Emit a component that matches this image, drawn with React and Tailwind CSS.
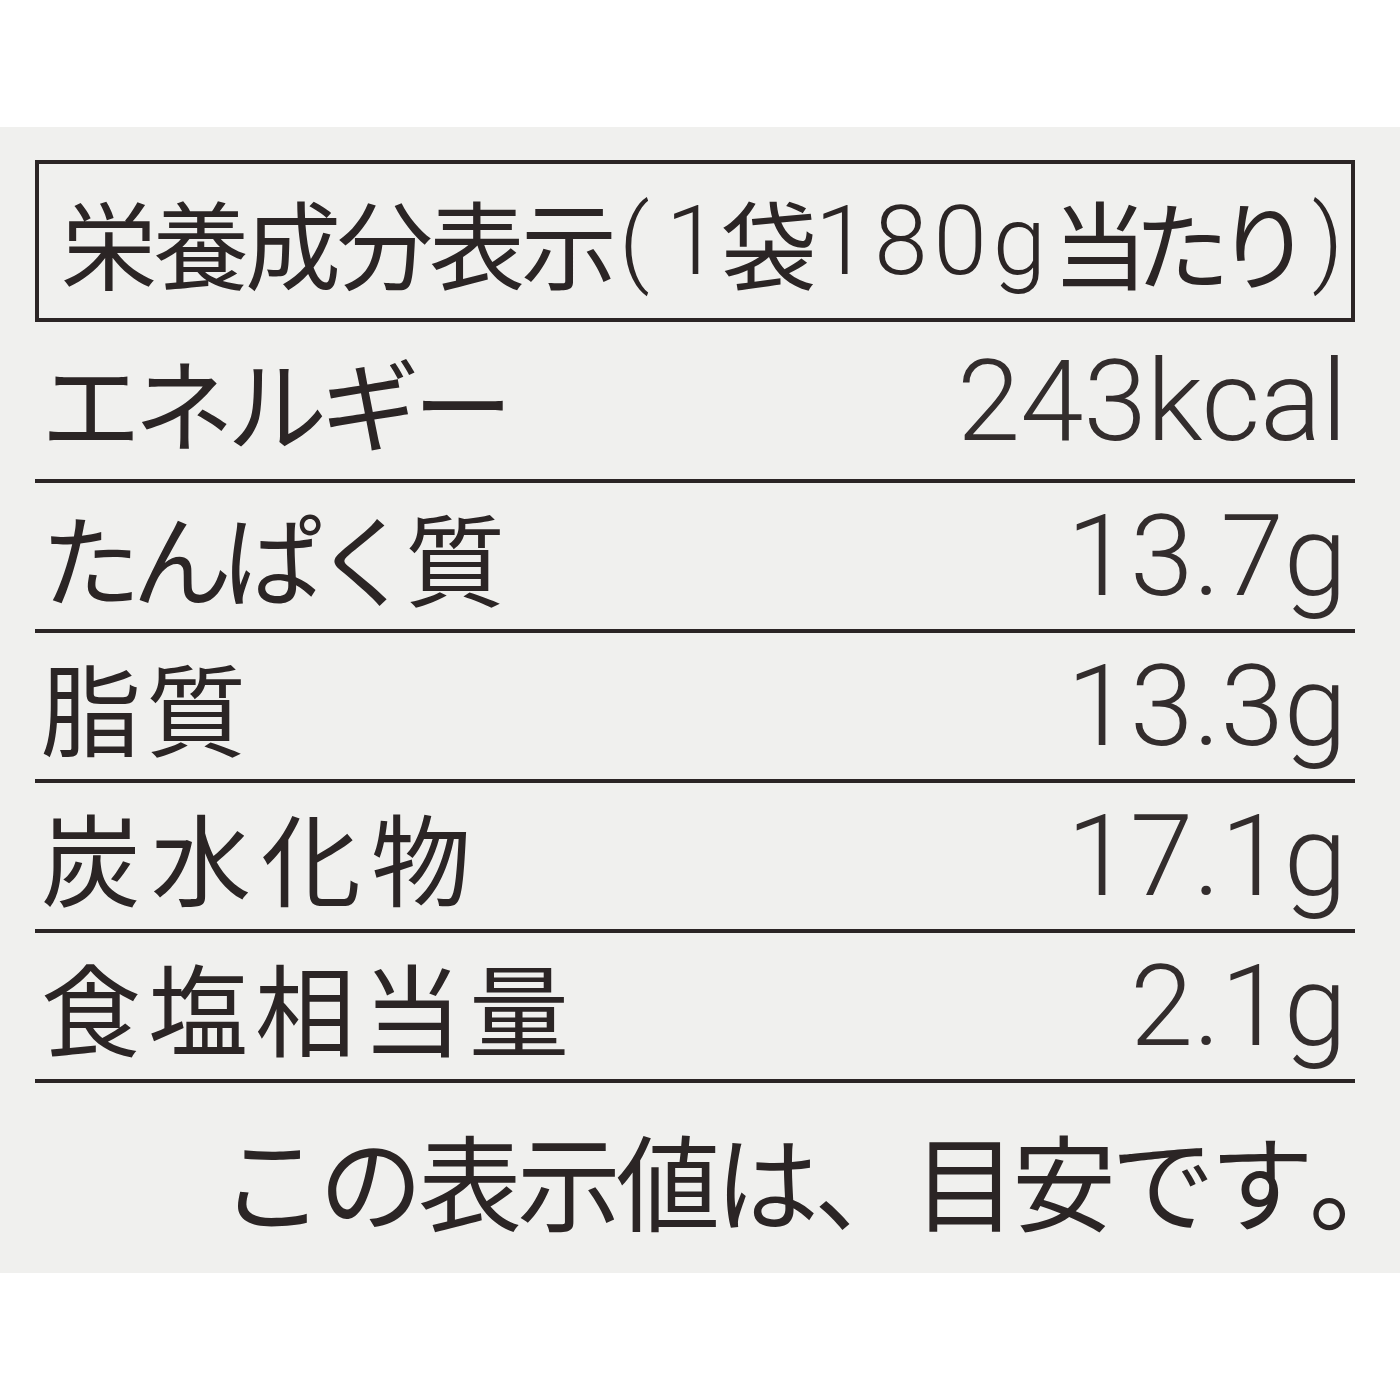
import React from 'react'

const rows = [
  { label: 'エネルギー', value: '243kcal', track: 'tracking-[-7px]', h: 'h-[161px]' },
  { label: 'たんぱく質', value: '13.7g', track: 'tracking-[-9px]', h: 'h-[150px]' },
  { label: '脂質', value: '13.3g', track: 'tracking-[5px]', h: 'h-[150px]' },
  { label: '炭水化物', value: '17.1g', track: 'tracking-[10px]', h: 'h-[150px]' },
  { label: '食塩相当量', value: '2.1g', track: 'tracking-[7px]', h: 'h-[150px]' },
]

const jp = "font-['Noto_Sans_CJK_JP','Noto_Sans',sans-serif]"
const num = "font-['Roboto','Liberation_Sans',sans-serif]"

export default function App() {
  return (
    <div className="w-[1400px] h-[1400px] bg-white pt-[127px] text-[#2b2525]">
      <div className="h-[1146px] bg-[#f0f0ee] pl-[35px] pr-[45px] pt-[33px]">
        {/* header box */}
        <div className={`h-[162px] border-4 border-[#2b2525] flex items-center whitespace-nowrap pl-[22px] text-[96px] leading-none ${jp}`}>
          <span className="shrink-0 tracking-[-4px]">栄養成分表示</span>
          <span className={`shrink-0 ml-[6px] mr-[16px] font-light ${num}`}>(</span>
          <span className={`shrink-0 font-light ${num}`}>1</span>
          <span className="shrink-0 ml-[2px]">袋</span>
          <span className={`shrink-0 ml-[-2px] tracking-[6px] font-light ${num}`}>180g</span>
          <span className="shrink-0 ml-[0px] tracking-[-14px]">当たり</span>
          <span className={`shrink-0 ml-[14px] font-light ${num}`}>)</span>
        </div>

        {rows.map((r) => (
          <div key={r.label} className={`${r.h} border-b-4 border-[#2b2525] flex items-center justify-between pl-[6px] pr-[8px]`}>
            <span className={`text-[100px] leading-none ${r.track} ${jp}`}>{r.label}</span>
            <span className={`text-[114px] leading-none font-light text-[#332d2d] ${num}`}>{r.value}</span>
          </div>
        ))}

        {/* footnote */}
        <div className={`flex justify-end items-center pt-[44px] text-[104px] leading-none whitespace-nowrap ${jp}`}>
          <span className="tracking-[-5px]">この表示値は、目安です</span>
          <span className="inline-block w-[46px] overflow-visible">。</span>
        </div>
      </div>
    </div>
  )
}
